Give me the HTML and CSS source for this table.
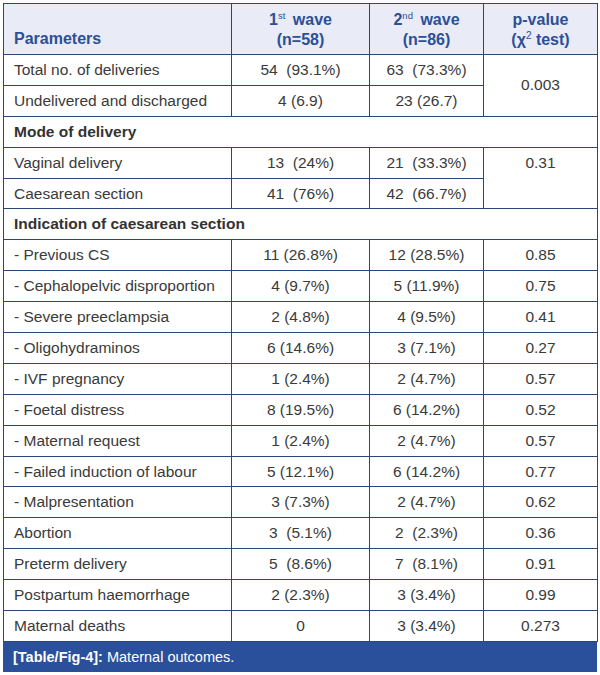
FILE: index.html
```html
<!DOCTYPE html>
<html>
<head>
<meta charset="utf-8">
<link rel="stylesheet" href="styles.css">
</head>
<body>
<div class="wrap">
<table class="tbl">
  <colgroup>
    <col class="c1"><col class="c2"><col class="c3"><col class="c4">
  </colgroup>
  <thead>
    <tr class="head">
      <th class="left">Parameters</th>
      <th>1<sup>st</sup> wave<br>(n=58)</th>
      <th>2<sup>nd</sup> wave<br>(n=86)</th>
      <th>p-value<br>(χ<sup class="sq">2</sup> test)</th>
    </tr>
  </thead>
  <tbody>
    <tr><td>Total no. of deliveries</td><td class="num">54&nbsp; (93.1%)</td><td class="num">63&nbsp; (73.3%)</td><td class="num" rowspan="2">0.003</td></tr>
    <tr><td>Undelivered and discharged</td><td class="num">4 (6.9)</td><td class="num">23 (26.7)</td></tr>
    <tr><td class="section" colspan="4">Mode of delivery</td></tr>
    <tr><td>Vaginal delivery</td><td class="num">13&nbsp; (24%)</td><td class="num">21&nbsp; (33.3%)</td><td class="num top" rowspan="2">0.31</td></tr>
    <tr><td>Caesarean section</td><td class="num">41&nbsp; (76%)</td><td class="num">42&nbsp; (66.7%)</td></tr>
    <tr><td class="section" colspan="4">Indication of caesarean section</td></tr>
    <tr><td>- Previous CS</td><td class="num">11 (26.8%)</td><td class="num">12 (28.5%)</td><td class="num">0.85</td></tr>
    <tr><td>- Cephalopelvic disproportion</td><td class="num">4 (9.7%)</td><td class="num">5 (11.9%)</td><td class="num">0.75</td></tr>
    <tr><td>- Severe preeclampsia</td><td class="num">2 (4.8%)</td><td class="num">4 (9.5%)</td><td class="num">0.41</td></tr>
    <tr><td>- Oligohydraminos</td><td class="num">6 (14.6%)</td><td class="num">3 (7.1%)</td><td class="num">0.27</td></tr>
    <tr><td>- IVF pregnancy</td><td class="num">1 (2.4%)</td><td class="num">2 (4.7%)</td><td class="num">0.57</td></tr>
    <tr><td>- Foetal distress</td><td class="num">8 (19.5%)</td><td class="num">6 (14.2%)</td><td class="num">0.52</td></tr>
    <tr><td>- Maternal request</td><td class="num">1 (2.4%)</td><td class="num">2 (4.7%)</td><td class="num">0.57</td></tr>
    <tr><td>- Failed induction of labour</td><td class="num">5 (12.1%)</td><td class="num">6 (14.2%)</td><td class="num">0.77</td></tr>
    <tr><td>- Malpresentation</td><td class="num">3 (7.3%)</td><td class="num">2 (4.7%)</td><td class="num">0.62</td></tr>
    <tr><td>Abortion</td><td class="num">3&nbsp; (5.1%)</td><td class="num">2&nbsp; (2.3%)</td><td class="num">0.36</td></tr>
    <tr><td>Preterm delivery</td><td class="num">5&nbsp; (8.6%)</td><td class="num">7&nbsp; (8.1%)</td><td class="num">0.91</td></tr>
    <tr><td>Postpartum haemorrhage</td><td class="num">2 (2.3%)</td><td class="num">3 (3.4%)</td><td class="num">0.99</td></tr>
    <tr><td>Maternal deaths</td><td class="num">0</td><td class="num">3 (3.4%)</td><td class="num">0.273</td></tr>
  </tbody>
</table>
<div class="caption"><b>[Table/Fig-4]:</b> Maternal outcomes.</div>
</div>
</body>
</html>
```

FILE: styles.css
```css
html, body {
  margin: 0;
  padding: 0;
  background: #ffffff;
}
body {
  font-family: "Liberation Sans", Arial, sans-serif;
  color: #3a3a3a;
}
.wrap {
  width: 594px;
  padding: 3px 0 0 3px;
}
.tbl {
  width: 594px;
  border-collapse: collapse;
  table-layout: fixed;
  font-size: 15.5px;
}
.c1 { width: 228px; }
.c2 { width: 138px; }
.c3 { width: 114px; }
.c4 { width: 114px; }
.tbl td, .tbl th {
  border: 1px solid #2a4775;
  padding: 0 10px;
  box-sizing: border-box;
  line-height: 18px;
  white-space: nowrap;
}
.tbl td { height: 30.9px; }
.head th {
  background: #e9ecf6;
  color: #2c4f98;
  font-weight: bold;
  font-size: 16px;
  height: 51px;
  text-align: center;
  vertical-align: middle;
  line-height: 20px;
  padding-top: 1px;
}
.head th.left {
  text-align: left;
  vertical-align: bottom;
  padding-bottom: 5px;
}
.head sup {
  font-size: 9.5px;
  vertical-align: 6px;
  line-height: 0;
  font-weight: normal;
  margin-right: 3px;
}
.head sup.sq {
  margin-right: 0;
  font-size: 10px;
}
.num { text-align: center; }
.top { vertical-align: top; padding-top: 6px !important; }
.section {
  font-weight: bold;
  color: #333333;
}
.caption {
  background: #2a4f9b;
  color: #ffffff;
  font-size: 14.5px;
  height: 30px;
  line-height: 30px;
  padding-left: 10px;
  width: 594px;
  box-sizing: border-box;
}
.caption b { font-weight: bold; }
```
